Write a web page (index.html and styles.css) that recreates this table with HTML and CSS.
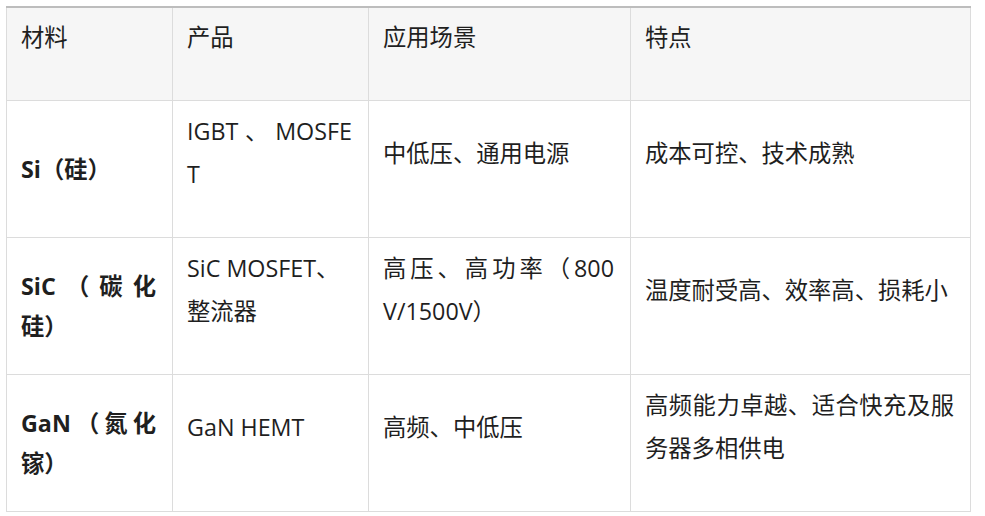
FILE: index.html
```html
<!DOCTYPE html>
<html lang="zh-CN">
<head>
<meta charset="utf-8">
<title>材料对比</title>
<link rel="stylesheet" href="styles.css">
</head>
<body>
<table class="spec">
  <colgroup>
    <col class="c1"><col class="c2"><col class="c3"><col class="c4">
  </colgroup>
  <thead>
    <tr>
      <th><p>材料</p></th>
      <th><p>产品</p></th>
      <th><p>应用场景</p></th>
      <th><p>特点</p></th>
    </tr>
  </thead>
  <tbody>
    <tr>
      <td class="mat"><strong>Si（硅）</strong></td>
      <td><p><span class="jl">IGBT、MOSFE</span>T</p></td>
      <td><p>中低压、通用电源</p></td>
      <td><p>成本可控、技术成熟</p></td>
    </tr>
    <tr>
      <td class="mat"><strong><span class="jl">SiC（碳化</span>硅）</strong></td>
      <td><p>SiC MOSFET、<br>整流器</p></td>
      <td><p><span class="jl">高压、高功率（800</span>V/1500V）</p></td>
      <td><p>温度耐受高、效率高、损耗小</p></td>
    </tr>
    <tr>
      <td class="mat"><strong><span class="jl">GaN（氮化</span>镓）</strong></td>
      <td><p>GaN HEMT</p></td>
      <td><p>高频、中低压</p></td>
      <td><p><span class="jl">高频能力卓越、适合快充及服</span>务器多相供电</p></td>
    </tr>
  </tbody>
</table>
</body>
</html>
```

FILE: styles.css
```css
html, body {
  margin: 0;
  padding: 0;
  background: #ffffff;
}

body {
  padding: 6px;
  font-family: "Open Sans", "Noto Sans CJK SC", sans-serif;
  font-size: 23.3px;
  color: #1f1f1f;
}

.spec {
  width: 964px;
  table-layout: fixed;
  border-collapse: collapse;
  border-top: 2px solid #bdbdbd;
}

.c1 { width: 166px; }
.c2 { width: 196px; }
.c3 { width: 262px; }
.c4 { width: 340px; }

.spec th,
.spec td {
  border: 1px solid #dcdcdc;
  padding: 9px 16px 9px 14px;
  vertical-align: middle;
  text-align: left;
  font-weight: normal;
  word-break: break-all;
}

.spec thead th {
  background: #f6f6f6;
  padding-top: 8px;
}

.spec p {
  margin: 0 0 32px;
  line-height: 43px;
}

.spec td.mat {
  line-height: 40px;
}

.spec strong {
  font-weight: bold;
}

.jl {
  display: block;
  text-align: justify;
  text-align-last: justify;
}
```
